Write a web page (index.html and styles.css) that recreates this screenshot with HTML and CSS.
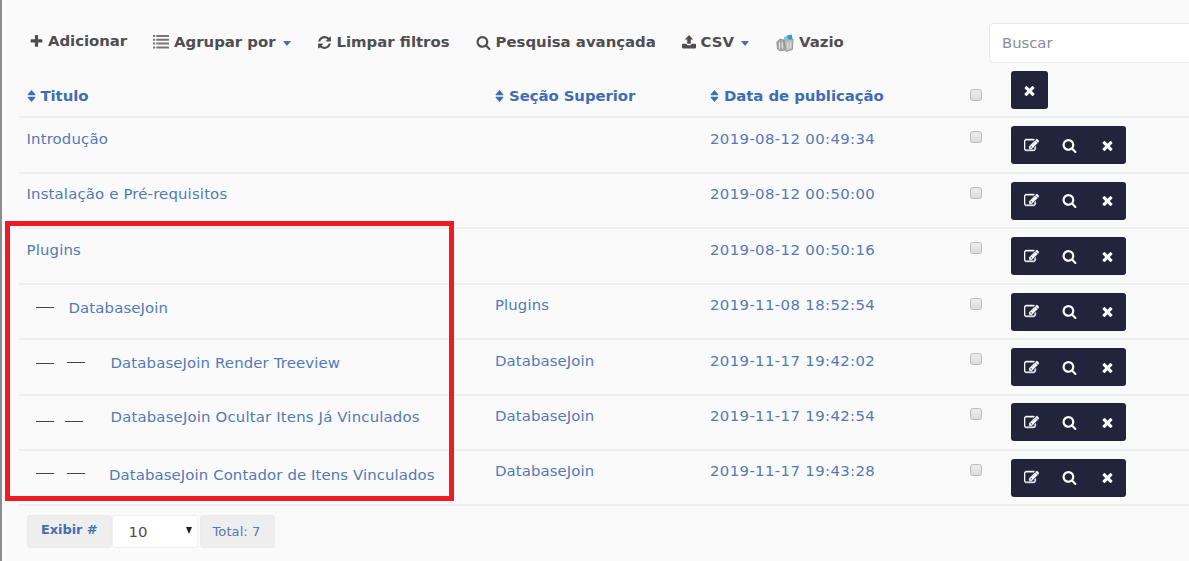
FILE: index.html
```html
<!DOCTYPE html>
<html lang="pt-BR">
<head>
<meta charset="utf-8">
<title>Lista</title>
<link rel="stylesheet" href="styles.css">
</head>
<body>
<svg class="defs" aria-hidden="true">
  <symbol id="plus" viewBox="0 0 1792 1792"><path d="M1600 736v192q0 40-28 68t-68 28h-416v416q0 40-28 68t-68 28h-192q-40 0-68-28t-28-68v-416h-416q-40 0-68-28t-28-68v-192q0-40 28-68t68-28h416v-416q0-40 28-68t68-28h192q40 0 68 28t28 68v416h416q40 0 68 28t28 68z"/></symbol>
  <symbol id="times" viewBox="0 0 1792 1792"><path d="M1490 1322q0 40-28 68l-136 136q-28 28-68 28t-68-28l-294-294-294 294q-28 28-68 28t-68-28l-136-136q-28-28-28-68t28-68l294-294-294-294q-28-28-28-68t28-68l136-136q28-28 68-28t68 28l294 294 294-294q28-28 68-28t68 28l136 136q28 28 28 68t-28 68l-294 294 294 294q28 28 28 68z"/></symbol>
  <symbol id="search" viewBox="0 0 1792 1792"><path d="M1216 832q0-185-131.5-316.5t-316.5-131.5-316.5 131.5-131.5 316.5 131.5 316.5 316.5 131.5 316.5-131.5 131.5-316.5zm512 832q0 52-38 90t-90 38q-54 0-90-38l-343-342q-179 124-399 124-143 0-273.5-55.5t-225-150-150-225-55.5-273.5 55.5-273.5 150-225 225-150 273.5-55.5 273.5 55.5 225 150 150 225 55.5 273.5q0 220-124 399l343 343q37 37 37 90z"/></symbol>
  <symbol id="refresh" viewBox="0 0 1792 1792"><path d="M1639 1056q0 5-1 7-64 268-268 434.5t-478 166.5q-146 0-282.5-55t-243.5-157l-129 129q-19 19-45 19t-45-19-19-45v-448q0-26 19-45t45-19h448q26 0 45 19t19 45-19 45l-137 137q71 66 161 102t187 36q134 0 250-65t186-179q11-17 53-117 8-23 30-23h192q13 0 22.5 9.5t9.5 22.5zm25-800v448q0 26-19 45t-45 19h-448q-26 0-45-19t-19-45 19-45l138-138q-148-137-349-137-134 0-250 65t-186 179q-11 17-53 117-8 23-30 23h-199q-13 0-22.5-9.5t-9.5-22.5v-7q65-268 270-434.5t480-166.5q146 0 284 55.5t245 156.5l130-129q19-19 45-19t45 19 19 45z"/></symbol>
  <symbol id="edit" viewBox="0 0 1792 1792"><path d="M888 1184l116-116-152-152-116 116v56h96v96h56zm440-720q-16-16-33 1l-350 350q-17 17-1 33t33-1l350-350q17-17 1-33zm80 594v190q0 119-84.5 203.5t-203.5 84.5h-832q-119 0-203.5-84.5t-84.5-203.5v-832q0-119 84.5-203.5t203.5-84.5h832q63 0 117 25 15 7 18 23 3 17-9 29l-49 49q-14 14-32 8-23-6-45-6h-832q-66 0-113 47t-47 113v832q0 66 47 113t113 47h832q66 0 113-47t47-113v-126q0-13 9-22l64-64q15-15 35-7t20 29zm-96-738l288 288-672 672h-288v-288zm444 132l-92 92-288-288 92-92q28-28 68-28t68 28l152 152q28 28 28 68t-28 68z"/></symbol>
  <symbol id="list" viewBox="0 0 16 14"><path d="M0 0h2.2v2H0zM3.3 0H16v2H3.3zM0 3.8h2.2v2H0zM3.3 3.8H16v2H3.3zM0 7.6h2.2v2H0zM3.3 7.6H16v2H3.3zM0 11.4h2.2v2H0zM3.3 11.4H16v2H3.3z"/></symbol>
  <symbol id="upload" viewBox="0 0 14 14"><path d="M7 0l4.2 4.6H8.8v4.2H5.2V4.6H2.8zM.8 8.8h3.6c.3 1 1.2 1.5 2.6 1.5s2.300-.5 2.600-1.500h3.600q.8 0 .8.8v3q0 .8-.8.8H.8q-.8 0-.8-.8v-3q0-.8.8-.8z"/></symbol>
  <symbol id="sort" viewBox="0 0 9 12"><path d="M4.500 0L8.400 4.400Q8.600 5.200 7.800 5.200H1.200Q.4 5.200.6 4.400zM4.500 12L.6 7.600Q.4 6.800 1.200 6.800H7.800Q8.600 6.800 8.400 7.600z"/></symbol>
</svg>

<div class="page">
  <div class="toolbar">
    <a class="tool tool-add"><svg class="icon"><use href="#plus"/></svg>Adicionar</a>
    <a class="tool tool-group"><svg class="icon icon-list"><use href="#list"/></svg>Agrupar por<i class="caret"></i></a>
    <a class="tool tool-clear"><svg class="icon"><use href="#refresh"/></svg>Limpar filtros</a>
    <a class="tool tool-search"><svg class="icon"><use href="#search"/></svg>Pesquisa avançada</a>
    <a class="tool tool-csv"><svg class="icon icon-up"><use href="#upload"/></svg>CSV<i class="caret"></i></a>
    <a class="tool tool-empty"><svg class="icon-bin" viewBox="0 0 18 18">
      <path d="M.8 8L4 5l4 1 1 10-5 .8L1.500 15z" fill="#aaa" stroke="#8d8d8d" stroke-width=".8"/>
      <path d="M8 6l9-1-.6 10.500-6.400 2z" fill="#bcbcbc" stroke="#888" stroke-width=".8"/>
      <path d="M8 6V3l7-2.500L17 5z" fill="#8fbfdf"/><path d="M11 1.500l5-.8v4.600h-4z" fill="#3499d4"/>
      <path d="M3.500 8.500v6M6.300 8.500v6M11.800 8.500v6M14.500 8v6" stroke="#e5e5e5" fill="none"/>
    </svg>Vazio</a>
    <div class="search-box">Buscar</div>
  </div>

  <div class="table">
    <div class="row head">
      <div><svg class="sort"><use href="#sort"/></svg>Titulo</div>
      <div><svg class="sort"><use href="#sort"/></svg>Seção Superior</div>
      <div><svg class="sort"><use href="#sort"/></svg>Data de publicação</div>
      <div><i class="check"></i></div>
      <div class="actions single"><svg class="icon"><use href="#times"/></svg></div>
    </div>
    <div class="row">
      <div>Introdução</div><div></div><div class="date">2019-08-12 00:49:34</div><div><i class="check"></i></div>
      <div class="actions"><svg class="icon icon-edit"><use href="#edit"/></svg><svg class="icon"><use href="#search"/></svg><svg class="icon"><use href="#times"/></svg></div>
    </div>
    <div class="row">
      <div>Instalação e Pré-requisitos</div><div></div><div class="date">2019-08-12 00:50:00</div><div><i class="check"></i></div>
      <div class="actions"><svg class="icon icon-edit"><use href="#edit"/></svg><svg class="icon"><use href="#search"/></svg><svg class="icon"><use href="#times"/></svg></div>
    </div>
    <div class="row">
      <div>Plugins</div><div></div><div class="date">2019-08-12 00:50:16</div><div><i class="check"></i></div>
      <div class="actions"><svg class="icon icon-edit"><use href="#edit"/></svg><svg class="icon"><use href="#search"/></svg><svg class="icon"><use href="#times"/></svg></div>
    </div>
    <div class="row">
      <div class="tree tree-one"><i class="dash"></i><span>DatabaseJoin</span></div><div>Plugins</div><div class="date">2019-11-08 18:52:54</div><div><i class="check"></i></div>
      <div class="actions"><svg class="icon icon-edit"><use href="#edit"/></svg><svg class="icon"><use href="#search"/></svg><svg class="icon"><use href="#times"/></svg></div>
    </div>
    <div class="row">
      <div class="tree tree-render"><i class="dash"></i><i class="dash"></i><span>DatabaseJoin Render Treeview</span></div><div>DatabaseJoin</div><div class="date">2019-11-17 19:42:02</div><div><i class="check"></i></div>
      <div class="actions"><svg class="icon icon-edit"><use href="#edit"/></svg><svg class="icon"><use href="#search"/></svg><svg class="icon"><use href="#times"/></svg></div>
    </div>
    <div class="row">
      <div class="tree tree-hide"><i class="dash"></i><i class="dash"></i><span>DatabaseJoin Ocultar Itens Já Vinculados</span></div><div>DatabaseJoin</div><div class="date">2019-11-17 19:42:54</div><div><i class="check"></i></div>
      <div class="actions"><svg class="icon icon-edit"><use href="#edit"/></svg><svg class="icon"><use href="#search"/></svg><svg class="icon"><use href="#times"/></svg></div>
    </div>
    <div class="row">
      <div class="tree tree-count"><i class="dash"></i><i class="dash"></i><span>DatabaseJoin Contador de Itens Vinculados</span></div><div>DatabaseJoin</div><div class="date">2019-11-17 19:43:28</div><div><i class="check"></i></div>
      <div class="actions"><svg class="icon icon-edit"><use href="#edit"/></svg><svg class="icon"><use href="#search"/></svg><svg class="icon"><use href="#times"/></svg></div>
    </div>
  </div>

  <div class="footer">
    <div class="addon label">Exibir #</div>
    <div class="select"><span>10</span><i class="arrow"></i></div>
    <div class="addon total">Total: 7</div>
  </div>
  <div class="highlight"></div>
</div>
</body>
</html>
```
FILE: styles.css
```css
* { box-sizing: border-box; }
body { margin: 0; background: #fafafa; overflow: hidden; }
.defs { display: none; }
.page {
  position: relative;
  width: 1189px;
  height: 561px;
  overflow: hidden;
  border-left: 2px solid #8c8c8c;
  font: 14.9px/20px Verdana, "DejaVu Sans", sans-serif;
  letter-spacing: 0.1px;
  color: #5379b8;
}
.icon { width: 15px; height: 15px; fill: currentColor; flex: none; }

/* Toolbar */
.toolbar { display: flex; height: 62px; padding: 22px 0 0 27px; color: #4e4e50; font-weight: bold; letter-spacing: 0; white-space: nowrap; }
.tool { display: flex; align-items: center; height: 40px; flex: none; }
.tool .icon { margin-right: 4px; }
.tool-add { width: 124px; padding-bottom: 2px; letter-spacing: -0.05px; }
.tool-group { width: 163.500px; }
.tool-clear { width: 159px; }
.tool-clear .icon { margin-right: 5px; }
.tool-search { width: 206px; }
.tool-search .icon { margin-right: 5px; }
.tool-csv { width: 94.500px; }
.tool-empty { width: 213px; }
.tool .icon-list { width: 16px; height: 14px; margin-right: 5px; fill: #777; }
.tool .icon-up { width: 14px; height: 14px; margin-right: 5px; }
.icon-bin { width: 18px; height: 18px; margin: 2px 5px 0 0; }
.caret { margin: 3px 0 0 7px; border: 4px solid transparent; border-top: 5px solid #3f6fbd; border-bottom: 0; }
.search-box {
  flex: none;
  width: 240px;
  height: 40px;
  margin-top: 1px;
  padding: 9px 12px;
  border: 1px solid #e6eaee;
  border-radius: 4px;
  background: #fff;
  color: #858d98;
  font-size: 14.800px;
  font-weight: normal;
}

/* Records */
.table { width: 1200px; padding-left: 17px; }
.row {
  display: grid;
  grid-template-columns: 468.500px 215px 259.500px 41px 1fr;
  align-items: start;
  height: 55.450px;
  padding: 10.400px 0 0 7.500px;
  border-bottom: 2px solid #eee;
  white-space: nowrap;
}
.head { height: 56.400px; padding-top: 24px; font-weight: bold; letter-spacing: -0.07px; color: #3e6db5; }
.row > div:first-child:not(.tree) { letter-spacing: 0.16px; }
.row.head > div:first-child:not(.tree) { letter-spacing: -0.07px; }
.date { letter-spacing: 0.370px; }
.sort { width: 9px; height: 12px; margin-right: 5px; fill: currentColor; vertical-align: -1px; }
.check {
  display: block;
  width: 12px;
  height: 12px;
  margin-top: 2.500px;
  border: 1px solid #bdbdbd;
  border-radius: 3px;
  background: linear-gradient(#eee, #dcdcdc);
}
.actions {
  display: flex;
  align-items: center;
  justify-content: space-between;
  width: 115px;
  height: 38px;
  margin-top: -2.500px;
  padding: 1px 11px 0 13px;
  border-radius: 3px;
  background: #22243c;
  color: #fff;
}
.actions .icon { margin-bottom: 1px; }
.icon-edit { stroke: #fff; stroke-width: 60px; }
.actions.single { width: 37px; margin-top: -15px; padding-left: 11px; }

/* Nested titles */
.tree { display: flex; align-items: flex-start; padding-left: 9px; letter-spacing: 0.130px; }
.tree span { margin: 2.500px 0 0 15px; }
.dash { width: 18px; height: 1px; margin-top: 12px; background: #444; }
.dash + .dash { margin-left: 13px; }
.tree .dash + .dash + span { margin-left: 26px; }
.tree-render .dash + .dash { margin-top: 11px; }
.tree-hide .dash { margin-top: 15px; }
.tree-hide .dash + .dash { margin-left: 11px; }
.tree-hide { letter-spacing: 0.170px; }
.tree-hide span { margin-top: 1px; }
.tree-hide .dash + .dash + span { margin-left: 28px; }
.tree-count .dash { margin-top: 12px; }
.tree-count { letter-spacing: 0.1px; }
.tree-count span { margin-top: 4px; }
.tree-count .dash + .dash + span { margin-left: 24.500px; }

/* Pagination */
.footer { display: flex; align-items: flex-start; padding: 8.500px 0 0 24.500px; letter-spacing: 0; }
.addon { height: 33px; border: 1px solid #e9ecef; border-radius: 3px; background: #eee; }
.label { width: 85px; padding: 4px 0 0 13.500px; font-size: 13px; font-weight: bold; letter-spacing: -0.1px; color: #466eae; }
.select { display: flex; justify-content: space-between; width: 86px; height: 33px; padding: 6px 5px 0 16px; border: 1px solid #eef1f4; border-radius: 3px; background: #fff; color: #4d4d4d; }
.arrow { height: 0; margin-top: 5px; border: 3.500px solid transparent; border-top: 7px solid #222; border-bottom: 0; }
.total { width: 75px; margin-left: 2px; padding: 6px 0 0 12px; font-size: 13px; letter-spacing: 0.1px; }

.highlight { position: absolute; left: 3px; top: 221px; width: 449px; height: 280px; border: 5px solid #ed1c24; }
```
